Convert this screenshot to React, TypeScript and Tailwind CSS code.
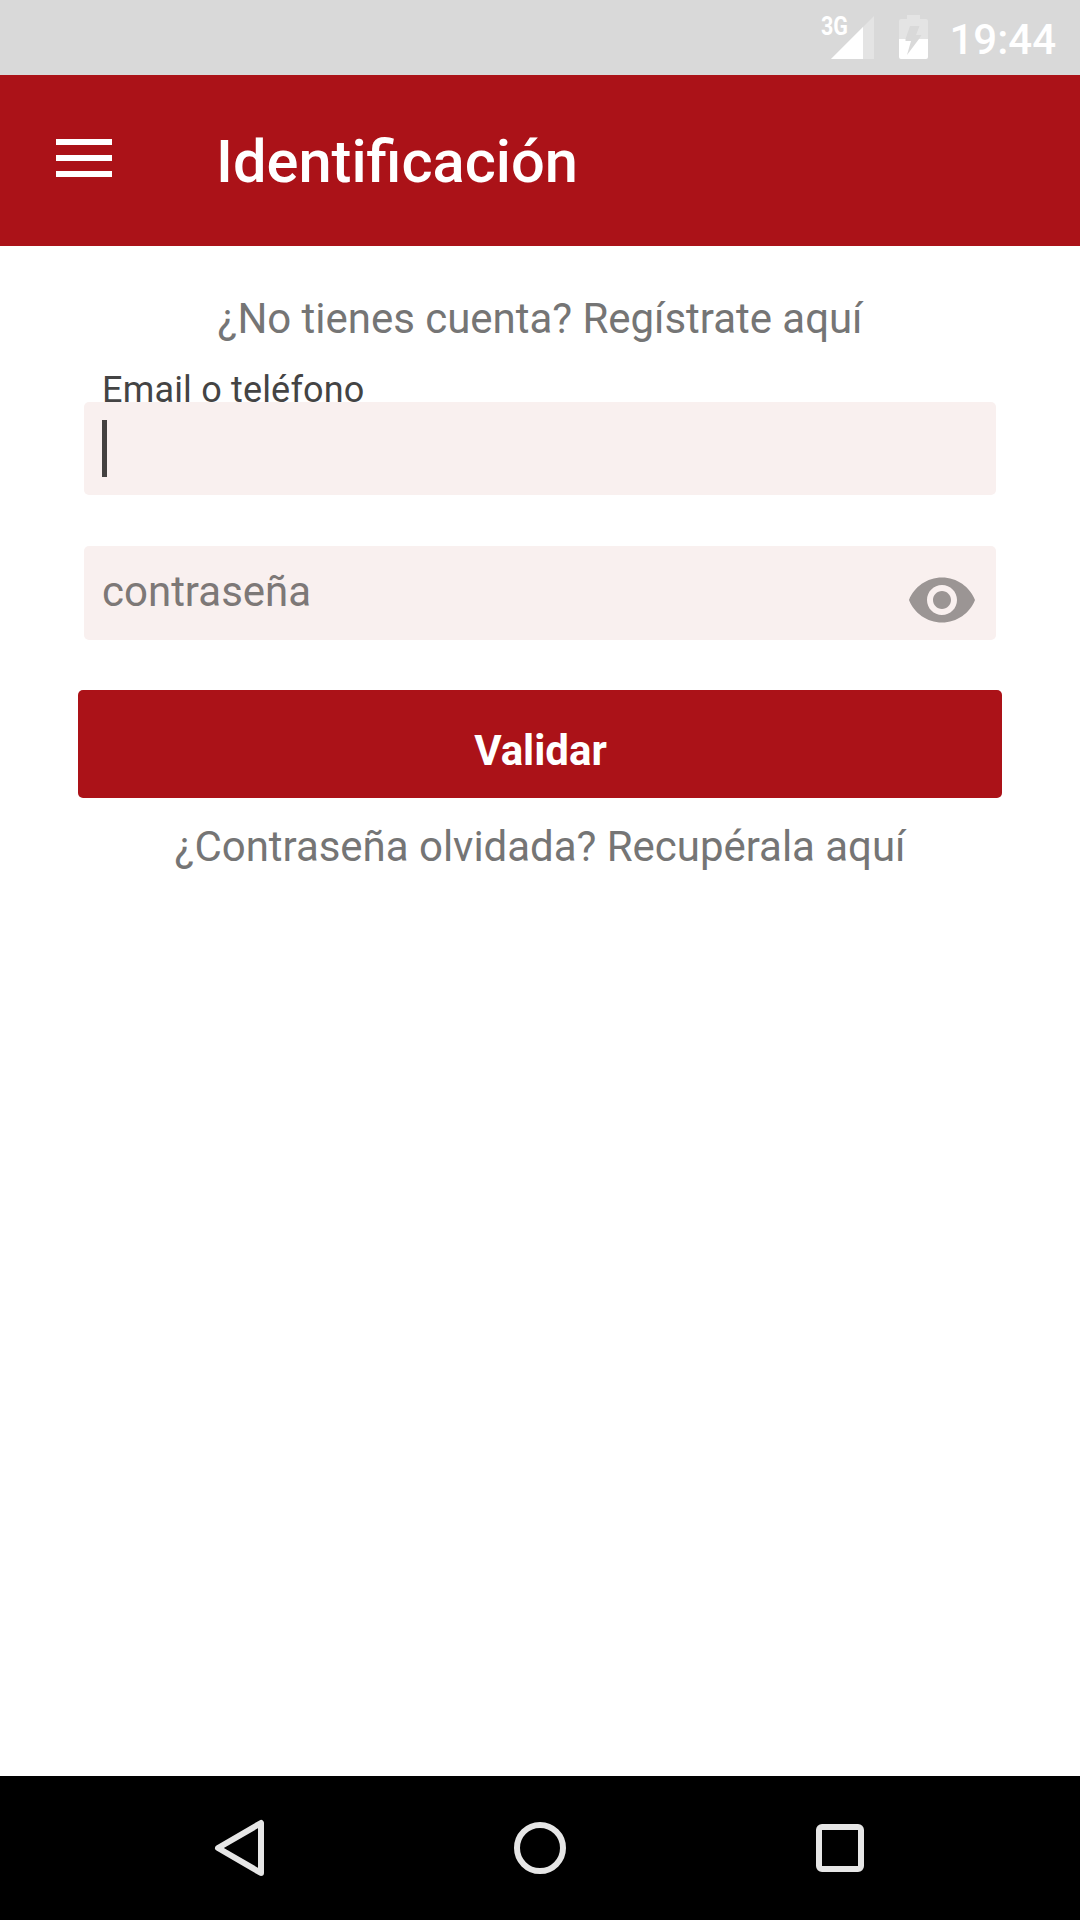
import type { ReactNode } from "react";

export default function App() {
  return (
    <div className="flex h-[1920px] w-[1080px] flex-col overflow-hidden bg-white font-['Roboto',sans-serif]">
      <StatusBar />
      <header className="flex h-[171px] items-start bg-[#ab1218] pl-14">
        <button className="mt-16 flex w-14 flex-col gap-2.5" aria-label="Menú">
          <span className="h-1.5 w-full bg-white" />
          <span className="h-1.5 w-full bg-white" />
          <span className="h-1.5 w-full bg-white" />
        </button>
        <h1 className="mt-[52px] ml-[104px] text-[59.6px] leading-[70px] font-medium text-white">
          Identificación
        </h1>
      </header>

      <main className="flex flex-1 flex-col px-[78px] pt-12">
        <HelpLink>¿No tienes cuenta? Regístrate aquí</HelpLink>

        <form className="mt-[25px] flex flex-col">
          <label className="h-[33px] pl-6 text-[36px] leading-[42px] tracking-[0.18px] text-[#444]">
            Email o teléfono
          </label>
          <div className="relative mx-1.5 h-[93px] rounded-[5px] bg-[#f9f0ef] pt-[18px] pl-[18px]">
            <div className="h-[57px] w-[5px] bg-[#444140]" />
          </div>

          <div className="mx-1.5 mt-[51px] flex h-[94px] items-start justify-between rounded-[5px] bg-[#f9f0ef] pr-[18px] pl-[18px]">
            <span className="mt-[21px] text-[42px] leading-[50px] text-[#7d7877]">
              contraseña
            </span>
            <EyeIcon />
          </div>

          <button
            type="button"
            className="mt-[50px] flex h-[108px] items-start justify-center rounded-[5px] bg-[#ab1218] pt-9 pl-px text-[42px] leading-[50px] font-bold text-white"
          >
            Validar
          </button>
        </form>

        <div className="mt-6">
          <HelpLink>¿Contraseña olvidada? Recupérala aquí</HelpLink>
        </div>
      </main>

      <NavigationBar />
    </div>
  );
}

function HelpLink({ children }: { children: ReactNode }) {
  return (
    <p className="text-center text-[42px] leading-[50px] tracking-[-0.03px] text-[#757575]">
      {children}
    </p>
  );
}

function StatusBar() {
  return (
    <div className="flex h-[75px] items-start justify-end bg-[#d9d9d9] pr-6 text-white">
      <svg width="56" height="75" viewBox="0 0 56 75" fill="currentColor">
        <path d="M56 16V59H13Z" opacity="0.3" />
        <path d="M45 27V59H13Z" />
        <text x="3" y="35" fontSize="25" fontWeight="700" textLength="27" lengthAdjust="spacingAndGlyphs">
          3G
        </text>
      </svg>
      <svg className="ml-[25px]" width="29" height="75" viewBox="0 0 29 75" fill="currentColor">
        <path
          d="M8 15H21V19H27Q29 19 29 21V39H20L22.5 35H17L20.5 26H11L6.5 39H0V21Q0 19 2 19H8Z"
          opacity="0.3"
        />
        <path d="M0 39H6.5V41H12L8 55L20 39H29V57Q29 59 27 59H2Q0 59 0 57Z" />
      </svg>
      <span className="mt-[15px] ml-[21px] text-[42px] leading-[50px] font-medium">
        19:44
      </span>
    </div>
  );
}

function EyeIcon() {
  return (
    <svg className="mt-[18px]" width="72" height="72" viewBox="0 0 24 24" fill="#9b9594">
      <path d="M12 4.5C7 4.5 2.73 7.61 1 12c1.73 4.39 6 7.5 11 7.5s9.27-3.11 11-7.5c-1.73-4.39-6-7.5-11-7.5zM12 17c-2.76 0-5-2.24-5-5s2.24-5 5-5 5 2.24 5 5-2.24 5-5 5zm0-8c-1.66 0-3 1.34-3 3s1.34 3 3 3 3-1.34 3-3-1.34-3-3-3z" />
    </svg>
  );
}

function NavigationBar() {
  return (
    <nav className="flex h-36 items-center justify-between bg-black px-[210px] text-[#e6e6e6]">
      <svg width="60" height="60" viewBox="0 0 60 60" fill="none" stroke="currentColor" strokeWidth="6" strokeLinejoin="round">
        <path d="M51 5V55L8 30Z" />
      </svg>
      <svg width="60" height="60" viewBox="0 0 60 60" fill="none" stroke="currentColor" strokeWidth="6">
        <circle cx="30" cy="30" r="23" />
      </svg>
      <svg width="60" height="60" viewBox="0 0 60 60" fill="none" stroke="currentColor" strokeWidth="6">
        <rect x="9" y="9" width="42" height="42" rx="3" />
      </svg>
    </nav>
  );
}
